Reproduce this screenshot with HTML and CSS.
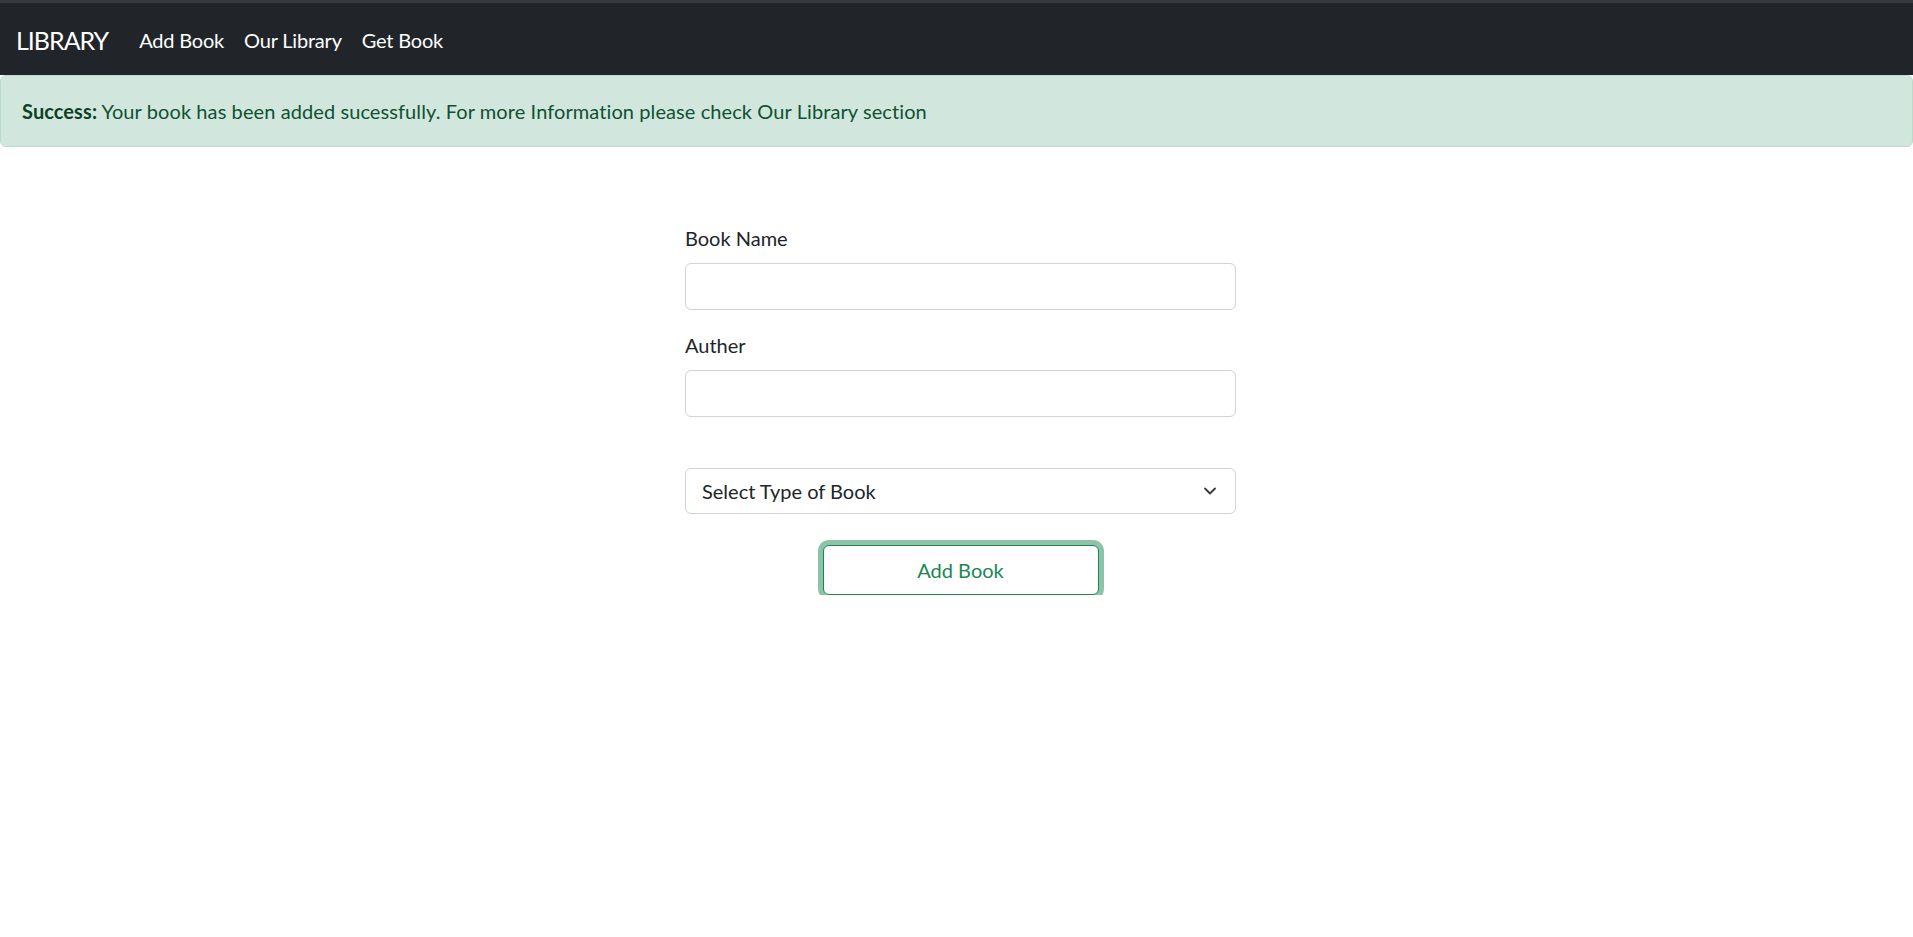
FILE: index.html
```html
<!DOCTYPE html>
<html lang="en">
<head>
<meta charset="utf-8">
<title>Library</title>
<link rel="stylesheet" href="styles.css">
</head>
<body>
<nav class="navbar">
  <a class="brand" href="#">LIBRARY</a>
  <ul class="nav-links">
    <li><a href="#">Add Book</a></li>
    <li><a href="#">Our Library</a></li>
    <li><a href="#">Get Book</a></li>
  </ul>
</nav>
<div class="alert"><strong>Success:</strong> Your book has been added sucessfully. For more Information please check Our Library section</div>
<main class="page">
  <form class="book-form">
    <div class="field">
      <label class="label" for="name">Book Name</label>
      <input class="control" id="name" type="text">
    </div>
    <div class="field">
      <label class="label" for="auther">Auther</label>
      <input class="control" id="auther" type="text">
    </div>
    <div class="field spaced">
      <div class="select">
        <span>Select Type of Book</span>
        <svg class="chevron" width="16" height="12" viewBox="0 0 16 12"><path d="M3 3.5l5 5 5-5" fill="none" stroke="#343a40" stroke-width="1.8" stroke-linecap="round" stroke-linejoin="round"/></svg>
      </div>
    </div>
    <div class="actions">
      <button class="btn" type="button">Add Book</button>
    </div>
  </form>
</main>
</body>
</html>
```
FILE: styles.css
```css
* { box-sizing: border-box; }
html, body { margin: 0; padding: 0; }
body {
  font-family: "Lato", "Liberation Sans", sans-serif;
  font-size: 20px;
  line-height: 30px;
  color: #212529;
  background: #fff;
}
.navbar {
  display: flex;
  align-items: center;
  height: 75px;
  border-top: 3px solid #38393c;
  background: #212529;
  padding: 2px 16px 0;
}
.brand {
  color: #fff;
  text-decoration: none;
  font-size: 25px;
  line-height: 37px;
  letter-spacing: -1px;
  margin-right: 21px;
}
.nav-links {
  display: flex;
  list-style: none;
  margin: 0;
  padding: 0;
}
.nav-links a {
  display: block;
  color: #fff;
  text-decoration: none;
  padding: 10px 10px;
  font-size: 20px;
  letter-spacing: -0.2px;
}
.alert {
  background: #d1e7dd;
  border: 1px solid #badbcc;
  border-radius: 6px;
  color: #0f5132;
  padding: 20px 21px;
  height: 72px;
  line-height: 30px;
  letter-spacing: 0.09px;
}
.alert strong { font-weight: 700; color: #0c4128; }
.page {
  display: flex;
  justify-content: center;
  padding: 76px 0 0 8px;
}
.book-form { width: 551px; }
.field { margin-bottom: 20px; }
.field.spaced { margin-top: 51px; }
.label {
  display: block;
  margin-bottom: 10px;
  height: 30px;
}
.control {
  display: block;
  width: 100%;
  height: 47px;
  border: 1px solid #ced4da;
  border-radius: 6px;
  font: inherit;
  padding: 7px 15px;
  outline: none;
}
.select {
  display: flex;
  align-items: center;
  justify-content: space-between;
  height: 46px;
  border: 1px solid #ced4da;
  border-radius: 6px;
  padding: 0 17px 0 16px;
  color: #212529;
}
.chevron { display: block; }
.actions {
  display: flex;
  justify-content: center;
  padding-top: 11px;
}
.btn {
  width: 276px;
  height: 50px;
  background: #fff;
  border: 1.5px solid #198754;
  border-radius: 6px;
  box-shadow: 0 0 0 5px rgba(25, 135, 84, 0.5);
  color: #198754;
  font: inherit;
  cursor: pointer;
}
```
